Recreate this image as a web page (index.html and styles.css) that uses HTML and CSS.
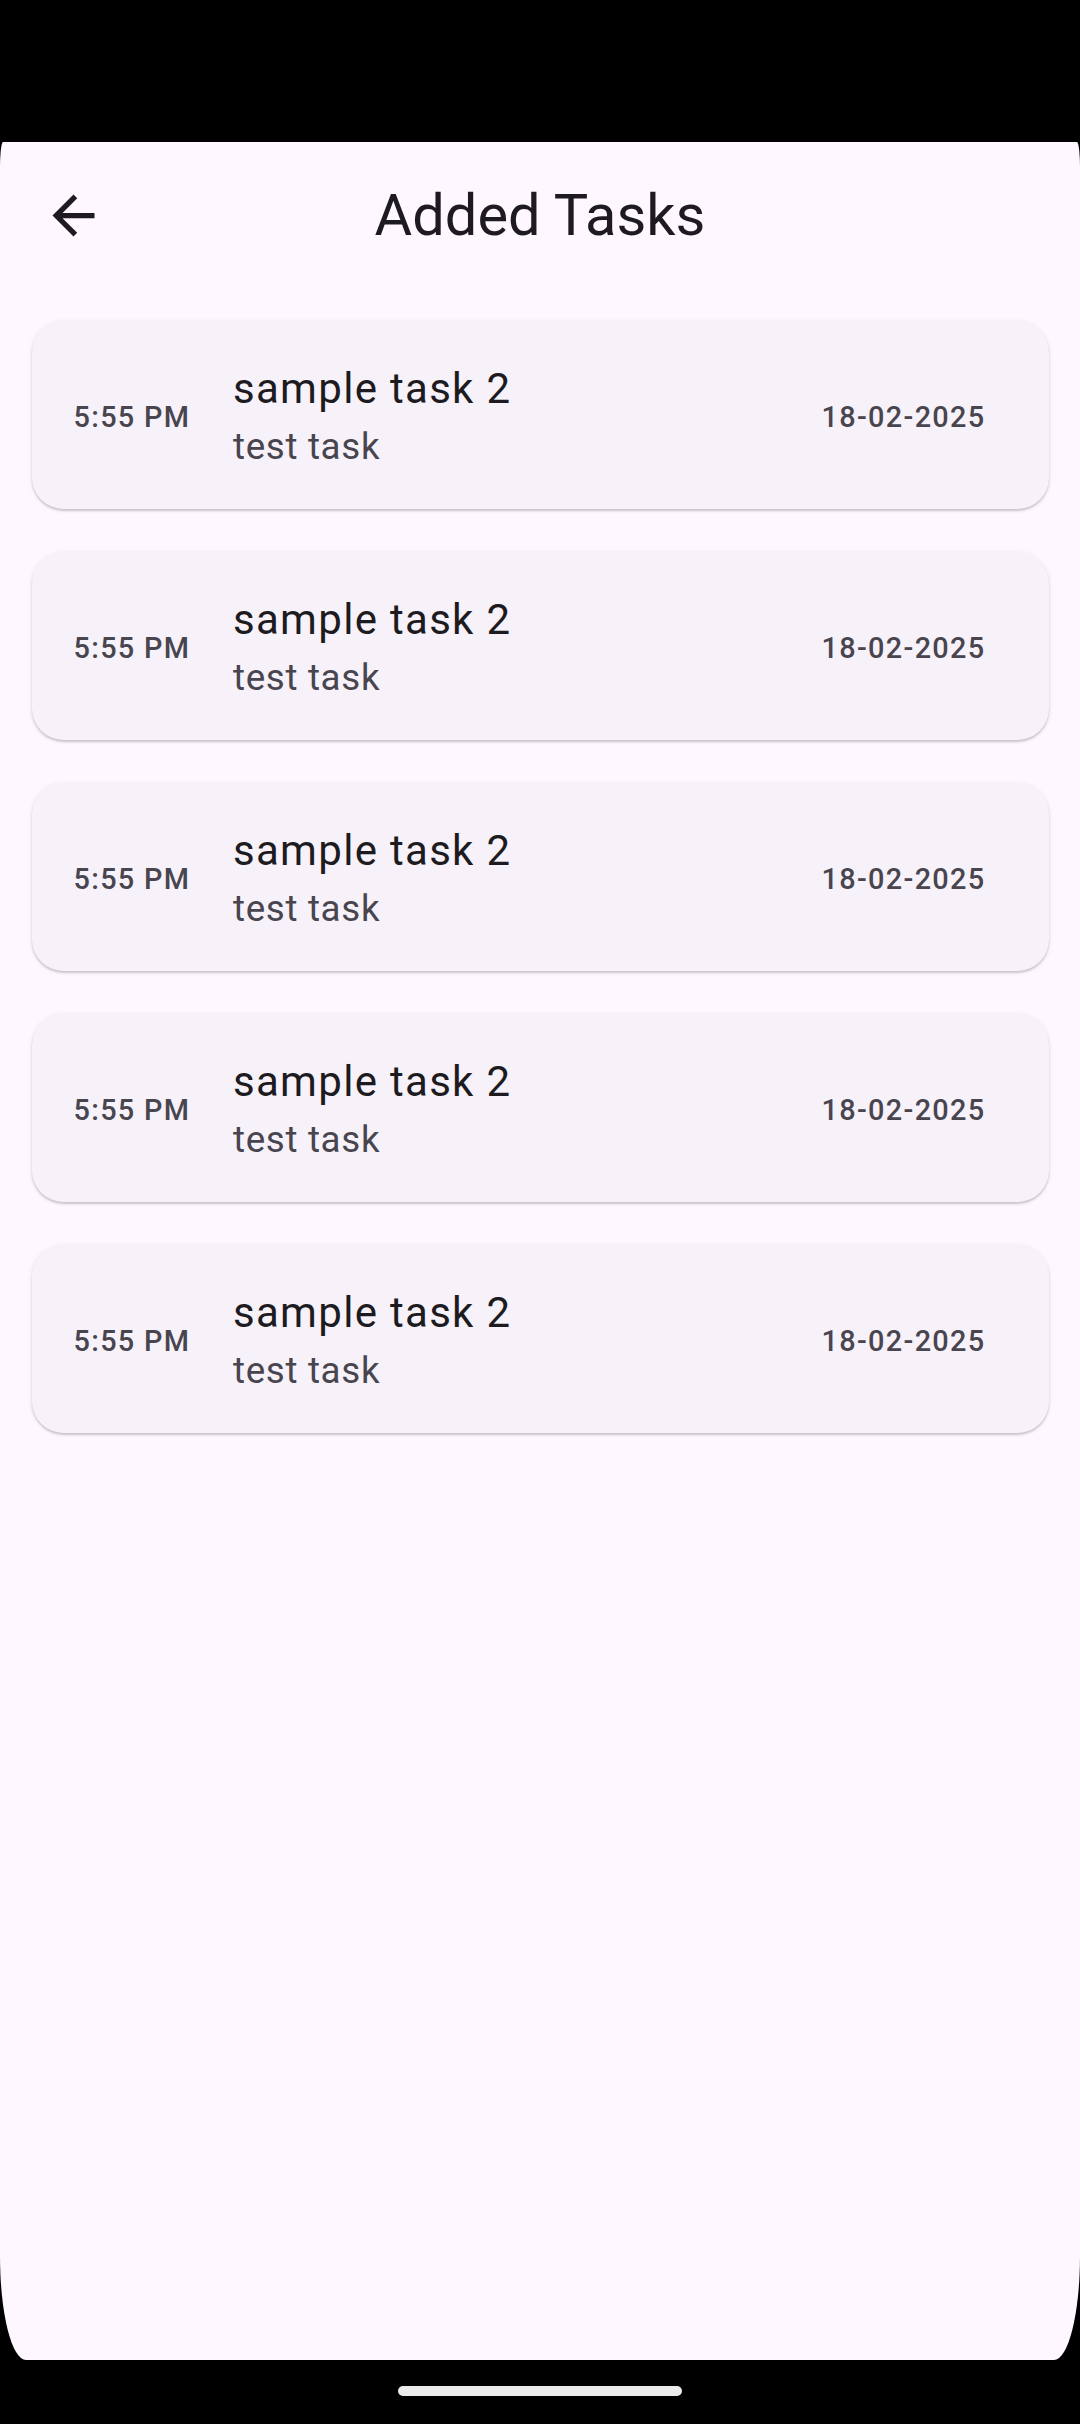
FILE: index.html
```html
<!DOCTYPE html>
<html lang="en">
<head>
<meta charset="utf-8">
<title>Added Tasks</title>
<link rel="stylesheet" href="styles.css">
</head>
<body>
<div class="screen">
  <div class="statusbar"></div>
  <div class="app">
    <header class="appbar">
      <div class="leading">
        <svg class="back" viewBox="0 0 24 24" width="63" height="63" aria-hidden="true">
          <path d="M20 11H7.83l5.59-5.59L12 4l-8 8 8 8 1.41-1.41L7.83 13H20v-2z" fill="#1d1b20"/>
        </svg>
      </div>
      <h1 class="title">Added Tasks</h1>
      <div class="trailing"></div>
    </header>
    <main class="list">
      <div class="card">
        <span class="time">5:55 PM</span>
        <div class="texts"><div class="task-title">sample task 2</div><div class="task-sub">test task</div></div>
        <span class="date">18-02-2025</span>
      </div>
      <div class="card">
        <span class="time">5:55 PM</span>
        <div class="texts"><div class="task-title">sample task 2</div><div class="task-sub">test task</div></div>
        <span class="date">18-02-2025</span>
      </div>
      <div class="card">
        <span class="time">5:55 PM</span>
        <div class="texts"><div class="task-title">sample task 2</div><div class="task-sub">test task</div></div>
        <span class="date">18-02-2025</span>
      </div>
      <div class="card">
        <span class="time">5:55 PM</span>
        <div class="texts"><div class="task-title">sample task 2</div><div class="task-sub">test task</div></div>
        <span class="date">18-02-2025</span>
      </div>
      <div class="card">
        <span class="time">5:55 PM</span>
        <div class="texts"><div class="task-title">sample task 2</div><div class="task-sub">test task</div></div>
        <span class="date">18-02-2025</span>
      </div>
    </main>
  </div>
  <div class="navbar"><div class="handle"></div></div>
</div>
</body>
</html>
```
FILE: styles.css
```css
html, body {
  margin: 0;
  padding: 0;
  background: #000;
}
body {
  font-family: Roboto, "Noto Sans", "Liberation Sans", sans-serif;
}
.screen {
  width: 1080px;
  height: 2424px;
  display: flex;
  flex-direction: column;
  background: #000;
  overflow: hidden;
}
.statusbar {
  height: 142px;
  flex: none;
  background: #000;
}
.app {
  flex: 1;
  background: #fef7ff;
  border-radius: 3px 3px 26px 26px / 26px 26px 104px 104px;
  display: flex;
  flex-direction: column;
}
.appbar {
  height: 147px;
  flex: none;
  display: grid;
  grid-template-columns: 147px 1fr 147px;
  align-items: center;
}
.leading {
  display: flex;
  align-items: center;
  justify-content: center;
}
.back {
  display: block;
}
.title {
  margin: 0;
  text-align: center;
  font-weight: 400;
  font-size: 57.75px;
  line-height: 73.5px;
  color: #1d1b20;
}
.list {
  padding: 32px 31.5px 0;
  display: flex;
  flex-direction: column;
  gap: 43px;
}
.card {
  height: 188px;
  box-sizing: border-box;
  background: #f7f2fa;
  border-radius: 31.5px;
  box-shadow: 0 2px 2px rgba(0, 0, 0, 0.16), 0 1px 4px 1px rgba(0, 0, 0, 0.06);
  display: flex;
  align-items: center;
  padding: 0 63px 0 42px;
  gap: 43.5px;
}
.time, .date {
  font-size: 28.875px;
  line-height: 42px;
  font-weight: 500;
  letter-spacing: 1.31px;
  color: #49454f;
  white-space: nowrap;
  padding-top: 3px;
}
.time {
  width: 116px;
  flex: none;
}
.texts {
  flex: 1;
  display: flex;
  flex-direction: column;
  padding-top: 1px;
}
.task-title {
  font-size: 42px;
  line-height: 63px;
  letter-spacing: 1.3px;
  color: #1d1b20;
}
.task-sub {
  font-size: 36.75px;
  line-height: 53.5px;
  letter-spacing: 0.66px;
  color: #49454f;
}
.navbar {
  height: 64px;
  flex: none;
  background: #000;
  display: flex;
  justify-content: center;
  padding-top: 26px;
  box-sizing: border-box;
}
.handle {
  width: 284px;
  height: 10px;
  border-radius: 5px;
  background: #ebebeb;
}
```
